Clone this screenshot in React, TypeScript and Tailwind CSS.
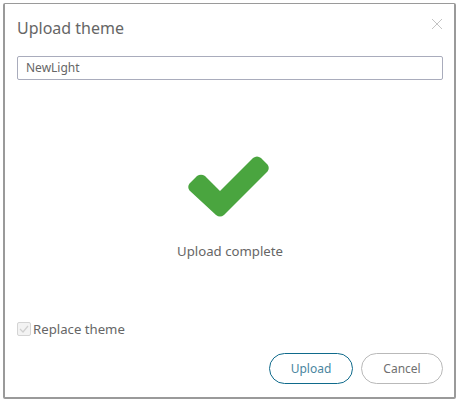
export default function App() {
  return (
    <div className="w-[459px] h-[401px] bg-white pl-[3px] pt-[3px] font-['Noto_Sans','Open_Sans',sans-serif]">
      <div className="relative flex h-[396px] w-[453px] flex-col rounded-[2px] border-2 border-t border-[#9a9a9a] bg-white pl-[12px] pr-[11px]">
        <button className="absolute right-[11px] top-[14px] text-[#c4c4c4]" aria-label="Close">
          <svg width="12" height="12" viewBox="0 0 12 12" fill="none" stroke="currentColor" strokeWidth="1">
            <path d="M1 1l10 10M11 1L1 11" />
          </svg>
        </button>
        <h1 className="mt-[13px] text-[16px] leading-[22px] font-normal text-[#666]">Upload theme</h1>
        <input
          readOnly
          value="NewLight"
          className="mt-[17px] h-[24px] w-full rounded-[2px] border border-[#a9acbc] px-[8px] pb-[2px] text-[12px] text-[#666] outline-none"
        />
        <div className="flex flex-1 flex-col items-center">
          <svg className="mt-[76px] mr-[3px]" width="83" height="62" viewBox="-2 0 83 62" fill="#4aa53f">
            <path d="M27 59 L0.500 34.500 Q-2 31 0.500 27.500 L8 20 Q12 17.500 16 20 L31 35 L64 2 Q68 -1 72 2 L78.500 8.500 Q81 12 78.500 15.500 L35 59 Q31 62 27 59 Z" />
          </svg>
          <p className="mt-[24px] text-[13.2px] leading-[18px] text-[#666]">Upload complete</p>
        </div>
        <label className="flex items-center gap-[2px] text-[13.2px] leading-[18px] text-[#666]">
          <span className="flex h-[14px] w-[14px] items-center justify-center rounded-[2px] border border-[#d4d4d4] bg-[#f3f3f3]">
            <svg width="10" height="10" viewBox="0 0 10 10" fill="none" stroke="#cfcfcf" strokeWidth="1.200">
              <path d="M1 5l3 3 5-6" />
            </svg>
          </span>
          Replace theme
        </label>
        <div className="mt-[15px] mb-[13px] flex justify-end gap-[8px]">
          <button className="h-[31px] w-[84px] rounded-full border border-[#0f6a8b] bg-white text-[12px] text-[#4a86a0]">Upload</button>
          <button className="h-[31px] w-[82px] rounded-full border border-[#b9b9b9] bg-white text-[12px] text-[#707070]">Cancel</button>
        </div>
      </div>
    </div>
  );
}
